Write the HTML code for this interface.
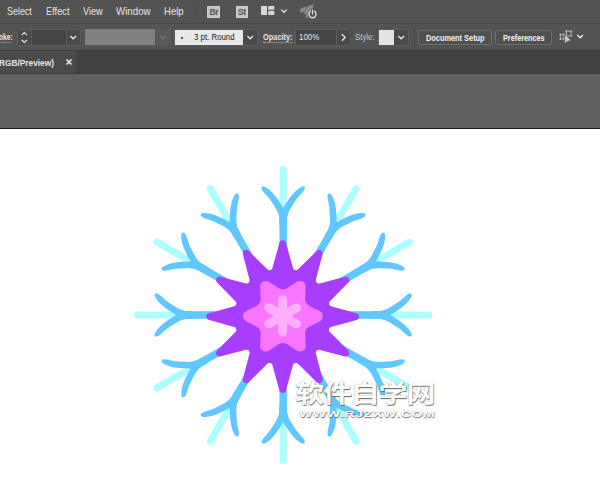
<!DOCTYPE html>
<html><head><meta charset="utf-8">
<style>
html,body{margin:0;padding:0;}
body{width:600px;height:499px;overflow:hidden;position:relative;background:#fff;font-family:"Liberation Sans","Noto Sans CJK SC",sans-serif;}
.abs{position:absolute;}
#menubar{left:0;top:0;width:600px;height:23px;background:#535353;}
#menuline{left:0;top:22.5px;width:600px;height:1.8px;background:#464646;z-index:2}
#toolbar{left:0;top:23px;width:600px;height:27px;background:#535353;}
#tabbar{left:0;top:50px;width:600px;height:23.9px;background:#424242;border-top:1px solid #3b3b3b;border-bottom:1.1px solid #3c3c3c;box-sizing:border-box}
#tab{left:0;top:51px;width:76px;height:21.7px;background:#4b4b4b;}
#gray{left:0;top:73.9px;width:600px;height:54px;background:#606060;}
#blackline{left:0;top:127.6px;width:600px;height:1.3px;background:#1c1c1c;}
.m{transform-origin:0 0;display:inline-block;position:absolute;top:5.4px;font-size:11px;color:#e6e6e6;line-height:13px;white-space:nowrap;}
.t{transform-origin:0 0;display:inline-block;position:absolute;font-size:8.5px;color:#e6e6e6;white-space:nowrap;line-height:11px;}
.box{position:absolute;box-sizing:border-box;}
.ic{position:absolute;width:12.8px;height:12.6px;background:#c2c2c2;box-shadow:inset 0 0 0 1px #d0d0d0;color:#555;font-size:8.6px;line-height:13.3px;text-align:center;letter-spacing:-0.4px;font-weight:bold}
.tb{border-bottom:1px dotted #bbb;line-height:9.6px !important;}
.btn{border:1px solid #6e6e6e;border-radius:2px;background:#505050;color:#f0f0f0;font-size:9px;line-height:15px;text-align:center;white-space:nowrap;font-weight:bold}
</style></head><body>
<div class="abs" id="menubar"></div>
<div class="abs" id="menuline"></div>
<div class="abs" id="toolbar"></div>
<div class="abs" id="tabbar"></div>
<div class="abs" id="tab"></div>
<div class="abs" id="gray"></div>
<div class="abs" id="blackline"></div>

<span class="m" id="m1" style="left:7.1px;transform:scaleX(0.811);">Select</span>
<span class="m" id="m2" style="left:45.7px;transform:scaleX(0.845);">Effect</span>
<span class="m" id="m3" style="left:82.7px;transform:scaleX(0.829);">View</span>
<span class="m" id="m4" style="left:116.1px;transform:scaleX(0.884);">Window</span>
<span class="m" id="m5" style="left:164.3px;transform:scaleX(0.866);">Help</span>
<div class="abs" style="left:195px;top:4px;width:1px;height:15px;background:#484848"></div>
<div class="ic" style="left:207.4px;top:5.5px;">Br</div>
<div class="ic" style="left:235.5px;top:5.5px;">St</div>
<svg class="abs" style="left:260px;top:5px" width="16" height="14" viewBox="0 0 16 14"><rect x="1" y="1" width="6" height="9" fill="#d6d6d6"/><rect x="8.2" y="1" width="6.1" height="3.7" fill="#d6d6d6"/><rect x="8.2" y="5.8" width="6.1" height="4.2" fill="#d6d6d6"/></svg>
<svg class="abs" style="left:280px;top:8px" width="9" height="7" viewBox="0 0 9 7"><path d="M1.4,1.6L4.1,4.3L6.8,1.6" stroke="#e6e6e6" stroke-width="1.3" fill="none"/></svg>
<svg class="abs" style="left:295px;top:0px" width="30" height="24" viewBox="0 0 30 24"><path d="M18.4,4.5Q10.8,5 9,13Q9.8,14.8 11.8,15Q19.2,11.5 18.4,4.5Z" fill="#8a8a8a"/><path d="M11,6.7Q5.6,7 4.6,11.2Q5.6,12.8 7.2,12.4Q11.4,10.8 11,6.7Z" fill="#8a8a8a"/><path d="M10.9,15.3L12.9,15L12.6,17.8L11.1,17.9Z" fill="#8a8a8a"/><circle cx="17.5" cy="14.3" r="4.6" fill="#535353"/><circle cx="17.5" cy="14.3" r="3.5" fill="none" stroke="#e2e2e2" stroke-width="1.4"/><path d="M17.5,8.6V14.6" stroke="#535353" stroke-width="3.4"/><path d="M17.5,9.7V14.5" stroke="#e2e2e2" stroke-width="1.3"/></svg>

<!-- toolbar -->
<span class="t tb" id="t1" style="font-weight:bold;left:-1.5px;top:32.8px;transform:scaleX(0.778);">oke:</span>
<div class="box" style="left:17px;top:29px;width:64px;height:17px;border:1px solid #5c5c5c;border-radius:2px;background:#4a4a4a"></div>
<div class="abs" style="left:31px;top:30px;width:36px;height:15px;background:#444;border-left:1px solid #5c5c5c;border-right:1px solid #5c5c5c;box-sizing:border-box"></div>
<svg class="abs" style="left:19px;top:30px" width="11" height="15" viewBox="0 0 11 15"><path d="M2.6,5.2L5.3,2.5L8,5.2M2.6,9.8L5.3,12.5L8,9.8" stroke="#e6e6e6" stroke-width="1.2" fill="none"/></svg>
<svg class="abs" style="left:68px;top:33px" width="11" height="9" viewBox="0 0 11 9"><path d="M2.4,3L5.2,5.8L8,3" stroke="#ececec" stroke-width="1.25" fill="none"/></svg>

<div class="abs" style="left:85px;top:29px;width:70.3px;height:16.3px;background:#818181"></div><div class="abs" style="left:155.6px;top:29px;width:15.6px;height:16.4px;background:#595959;border-radius:0 2px 2px 0"></div>
<svg class="abs" style="left:158px;top:33px" width="11" height="9" viewBox="0 0 11 9"><path d="M2.4,3L5.2,5.8L8,3" stroke="#787878" stroke-width="1.25" fill="none"/></svg>

<div class="box" style="left:174px;top:29px;width:84px;height:17px;border:1px solid #5c5c5c;border-radius:2px;background:#4a4a4a"></div>
<div class="abs" style="left:175px;top:29.8px;width:68px;height:14.8px;background:#e8e8e8"></div>
<div class="abs" style="left:181.3px;top:36.8px;width:2px;height:2px;background:#222;border-radius:1px"></div>
<span class="t" id="t2" style="left:193.7px;top:32.1px;color:#1a1a1a;transform:scaleX(0.924);">3 pt. Round</span>
<svg class="abs" style="left:245px;top:33px" width="11" height="9" viewBox="0 0 11 9"><path d="M2.4,3L5.2,5.8L8,3" stroke="#ececec" stroke-width="1.25" fill="none"/></svg>

<span class="t tb" id="t3" style="left:262.7px;top:32.8px;font-weight:bold;transform:scaleX(0.870);">Opacity:</span>
<div class="box" style="left:295px;top:29px;width:56px;height:17px;border:1px solid #5c5c5c;border-radius:2px;background:#4a4a4a"></div>
<div class="abs" style="left:296px;top:30px;width:41px;height:15px;background:#444;border-right:1px solid #5c5c5c;box-sizing:border-box"></div>
<span class="t" id="t4" style="left:299.1px;top:32.1px;transform:scaleX(0.929);">100%</span>
<svg class="abs" style="left:339px;top:32.1px" width="9" height="11" viewBox="0 0 9 11"><path d="M3,2.2L6.2,5.5L3,8.8" stroke="#e6e6e6" stroke-width="1.3" fill="none"/></svg>

<span class="t" id="t5" style="left:354.7px;top:32.1px;color:#c8c8c8;transform:scaleX(0.922);">Style:</span>
<div class="box" style="left:378px;top:29px;width:31px;height:17px;border:1px solid #5c5c5c;border-radius:2px;background:#4a4a4a"></div>
<div class="abs" style="left:379px;top:30px;width:15px;height:15px;background:#e4e4e4"></div>
<svg class="abs" style="left:396px;top:33px" width="11" height="9" viewBox="0 0 11 9"><path d="M2.4,3L5.2,5.8L8,3" stroke="#ececec" stroke-width="1.25" fill="none"/></svg>
<div class="abs" style="left:414px;top:27px;width:1px;height:20px;background:#484848"></div>

<div class="box btn" style="left:418px;top:29.5px;width:74px;height:15.5px;"></div><span class="t" id="t6" style="left:425.9px;top:32.8px;color:#f4f4f4;font-weight:bold;transform:scaleX(0.868);">Document Setup</span>
<div class="box btn" style="left:495px;top:29.5px;width:57px;height:15.5px;"></div><span class="t" id="t7" style="left:502.7px;top:32.8px;color:#f4f4f4;font-weight:bold;transform:scaleX(0.855);">Preferences</span>
<svg class="abs" style="left:553px;top:26px" width="40" height="24" viewBox="0 0 40 24"><path d="M6.2,8.6H11.8M6.2,12.8H11.8M7.4,7.4V14M10.8,7.4V14" stroke="#b4b4b4" stroke-width="1" fill="none"/><path d="M12.3,5.2H19.3M12.3,9.9H19.3M13.5,4V11M18.1,4V11" stroke="#b4b4b4" stroke-width="1" fill="none"/><path d="M11.8,8.4L11.8,17.6L14.2,15.4L18.2,14.4Z" fill="#d2d2d2" stroke="#535353" stroke-width="0.6"/></svg>
<svg class="abs" style="left:574.8px;top:32.3px" width="11" height="9" viewBox="0 0 11 9"><path d="M2.4,3L5.2,5.8L8,3" stroke="#ececec" stroke-width="1.25" fill="none"/></svg>

<!-- tab -->
<span class="t" id="t8" style="left:-1.3px;top:57px;font-weight:bold;font-size:9.5px;transform:scaleX(0.874);">RGB/Preview)</span>
<svg class="abs" style="left:65px;top:58px" width="8" height="8" viewBox="0 0 8 8"><path d="M1.5,1.5L6.5,6.5M6.5,1.5L1.5,6.5" stroke="#f0f0f0" stroke-width="1.5" fill="none"/></svg>

<svg id="flake" width="600" height="370" viewBox="0 129 600 370" style="position:absolute;left:0;top:129px">
<g transform="translate(283.2,315.0)">
<g transform="rotate(0)"><path d="M0,0H145.8" stroke="#adfeff" stroke-width="7" stroke-linecap="round" fill="none"/>
<path d="M60,0H100" stroke="#60c7ff" stroke-width="7.4" fill="none"/>
<path d="M90,-3.7L95,-3.7Q102,-4 108.6,-8.7Q116.9,-13.4 123.2,-19.8Q124.8,-21 125.8,-21.4Q129,-22.4 128.6,-18.9Q125.9,-13 118.2,-7.3Q113,-3.4 107,0L100,3.7L90,3.7Z" fill="#60c7ff"/><path d="M90,-3.7L95,-3.7Q102,-4 108.6,-8.7Q116.9,-13.4 123.2,-19.8Q124.8,-21 125.8,-21.4Q129,-22.4 128.6,-18.9Q125.9,-13 118.2,-7.3Q113,-3.4 107,0L100,3.7L90,3.7Z" fill="#60c7ff" transform="scale(1,-1)"/></g><g transform="rotate(-30)"><path d="M0,0H145.8" stroke="#adfeff" stroke-width="7" stroke-linecap="round" fill="none"/>
<path d="M60,0H100" stroke="#60c7ff" stroke-width="7.4" fill="none"/>
<path d="M90,-3.7L95,-3.7Q102,-4 108.6,-8.7Q116.9,-13.4 123.2,-19.8Q124.8,-21 125.8,-21.4Q129,-22.4 128.6,-18.9Q125.9,-13 118.2,-7.3Q113,-3.4 107,0L100,3.7L90,3.7Z" fill="#60c7ff"/><path d="M90,-3.7L95,-3.7Q102,-4 108.6,-8.7Q116.9,-13.4 123.2,-19.8Q124.8,-21 125.8,-21.4Q129,-22.4 128.6,-18.9Q125.9,-13 118.2,-7.3Q113,-3.4 107,0L100,3.7L90,3.7Z" fill="#60c7ff" transform="scale(1,-1)"/></g><g transform="rotate(-60)"><path d="M0,0H145.8" stroke="#adfeff" stroke-width="7" stroke-linecap="round" fill="none"/>
<path d="M60,0H100" stroke="#60c7ff" stroke-width="7.4" fill="none"/>
<path d="M90,-3.7L95,-3.7Q102,-4 108.6,-8.7Q116.9,-13.4 123.2,-19.8Q124.8,-21 125.8,-21.4Q129,-22.4 128.6,-18.9Q125.9,-13 118.2,-7.3Q113,-3.4 107,0L100,3.7L90,3.7Z" fill="#60c7ff"/><path d="M90,-3.7L95,-3.7Q102,-4 108.6,-8.7Q116.9,-13.4 123.2,-19.8Q124.8,-21 125.8,-21.4Q129,-22.4 128.6,-18.9Q125.9,-13 118.2,-7.3Q113,-3.4 107,0L100,3.7L90,3.7Z" fill="#60c7ff" transform="scale(1,-1)"/></g><g transform="rotate(-90)"><path d="M0,0H145.8" stroke="#adfeff" stroke-width="7" stroke-linecap="round" fill="none"/>
<path d="M60,0H100" stroke="#60c7ff" stroke-width="7.4" fill="none"/>
<path d="M90,-3.7L95,-3.7Q102,-4 108.6,-8.7Q116.9,-13.4 123.2,-19.8Q124.8,-21 125.8,-21.4Q129,-22.4 128.6,-18.9Q125.9,-13 118.2,-7.3Q113,-3.4 107,0L100,3.7L90,3.7Z" fill="#60c7ff"/><path d="M90,-3.7L95,-3.7Q102,-4 108.6,-8.7Q116.9,-13.4 123.2,-19.8Q124.8,-21 125.8,-21.4Q129,-22.4 128.6,-18.9Q125.9,-13 118.2,-7.3Q113,-3.4 107,0L100,3.7L90,3.7Z" fill="#60c7ff" transform="scale(1,-1)"/></g><g transform="rotate(-120)"><path d="M0,0H145.8" stroke="#adfeff" stroke-width="7" stroke-linecap="round" fill="none"/>
<path d="M60,0H100" stroke="#60c7ff" stroke-width="7.4" fill="none"/>
<path d="M90,-3.7L95,-3.7Q102,-4 108.6,-8.7Q116.9,-13.4 123.2,-19.8Q124.8,-21 125.8,-21.4Q129,-22.4 128.6,-18.9Q125.9,-13 118.2,-7.3Q113,-3.4 107,0L100,3.7L90,3.7Z" fill="#60c7ff"/><path d="M90,-3.7L95,-3.7Q102,-4 108.6,-8.7Q116.9,-13.4 123.2,-19.8Q124.8,-21 125.8,-21.4Q129,-22.4 128.6,-18.9Q125.9,-13 118.2,-7.3Q113,-3.4 107,0L100,3.7L90,3.7Z" fill="#60c7ff" transform="scale(1,-1)"/></g><g transform="rotate(-150)"><path d="M0,0H145.8" stroke="#adfeff" stroke-width="7" stroke-linecap="round" fill="none"/>
<path d="M60,0H100" stroke="#60c7ff" stroke-width="7.4" fill="none"/>
<path d="M90,-3.7L95,-3.7Q102,-4 108.6,-8.7Q116.9,-13.4 123.2,-19.8Q124.8,-21 125.8,-21.4Q129,-22.4 128.6,-18.9Q125.9,-13 118.2,-7.3Q113,-3.4 107,0L100,3.7L90,3.7Z" fill="#60c7ff"/><path d="M90,-3.7L95,-3.7Q102,-4 108.6,-8.7Q116.9,-13.4 123.2,-19.8Q124.8,-21 125.8,-21.4Q129,-22.4 128.6,-18.9Q125.9,-13 118.2,-7.3Q113,-3.4 107,0L100,3.7L90,3.7Z" fill="#60c7ff" transform="scale(1,-1)"/></g><g transform="rotate(-180)"><path d="M0,0H145.8" stroke="#adfeff" stroke-width="7" stroke-linecap="round" fill="none"/>
<path d="M60,0H100" stroke="#60c7ff" stroke-width="7.4" fill="none"/>
<path d="M90,-3.7L95,-3.7Q102,-4 108.6,-8.7Q116.9,-13.4 123.2,-19.8Q124.8,-21 125.8,-21.4Q129,-22.4 128.6,-18.9Q125.9,-13 118.2,-7.3Q113,-3.4 107,0L100,3.7L90,3.7Z" fill="#60c7ff"/><path d="M90,-3.7L95,-3.7Q102,-4 108.6,-8.7Q116.9,-13.4 123.2,-19.8Q124.8,-21 125.8,-21.4Q129,-22.4 128.6,-18.9Q125.9,-13 118.2,-7.3Q113,-3.4 107,0L100,3.7L90,3.7Z" fill="#60c7ff" transform="scale(1,-1)"/></g><g transform="rotate(-210)"><path d="M0,0H145.8" stroke="#adfeff" stroke-width="7" stroke-linecap="round" fill="none"/>
<path d="M60,0H100" stroke="#60c7ff" stroke-width="7.4" fill="none"/>
<path d="M90,-3.7L95,-3.7Q102,-4 108.6,-8.7Q116.9,-13.4 123.2,-19.8Q124.8,-21 125.8,-21.4Q129,-22.4 128.6,-18.9Q125.9,-13 118.2,-7.3Q113,-3.4 107,0L100,3.7L90,3.7Z" fill="#60c7ff"/><path d="M90,-3.7L95,-3.7Q102,-4 108.6,-8.7Q116.9,-13.4 123.2,-19.8Q124.8,-21 125.8,-21.4Q129,-22.4 128.6,-18.9Q125.9,-13 118.2,-7.3Q113,-3.4 107,0L100,3.7L90,3.7Z" fill="#60c7ff" transform="scale(1,-1)"/></g><g transform="rotate(-240)"><path d="M0,0H145.8" stroke="#adfeff" stroke-width="7" stroke-linecap="round" fill="none"/>
<path d="M60,0H100" stroke="#60c7ff" stroke-width="7.4" fill="none"/>
<path d="M90,-3.7L95,-3.7Q102,-4 108.6,-8.7Q116.9,-13.4 123.2,-19.8Q124.8,-21 125.8,-21.4Q129,-22.4 128.6,-18.9Q125.9,-13 118.2,-7.3Q113,-3.4 107,0L100,3.7L90,3.7Z" fill="#60c7ff"/><path d="M90,-3.7L95,-3.7Q102,-4 108.6,-8.7Q116.9,-13.4 123.2,-19.8Q124.8,-21 125.8,-21.4Q129,-22.4 128.6,-18.9Q125.9,-13 118.2,-7.3Q113,-3.4 107,0L100,3.7L90,3.7Z" fill="#60c7ff" transform="scale(1,-1)"/></g><g transform="rotate(-270)"><path d="M0,0H145.8" stroke="#adfeff" stroke-width="7" stroke-linecap="round" fill="none"/>
<path d="M60,0H100" stroke="#60c7ff" stroke-width="7.4" fill="none"/>
<path d="M90,-3.7L95,-3.7Q102,-4 108.6,-8.7Q116.9,-13.4 123.2,-19.8Q124.8,-21 125.8,-21.4Q129,-22.4 128.6,-18.9Q125.9,-13 118.2,-7.3Q113,-3.4 107,0L100,3.7L90,3.7Z" fill="#60c7ff"/><path d="M90,-3.7L95,-3.7Q102,-4 108.6,-8.7Q116.9,-13.4 123.2,-19.8Q124.8,-21 125.8,-21.4Q129,-22.4 128.6,-18.9Q125.9,-13 118.2,-7.3Q113,-3.4 107,0L100,3.7L90,3.7Z" fill="#60c7ff" transform="scale(1,-1)"/></g><g transform="rotate(-300)"><path d="M0,0H145.8" stroke="#adfeff" stroke-width="7" stroke-linecap="round" fill="none"/>
<path d="M60,0H100" stroke="#60c7ff" stroke-width="7.4" fill="none"/>
<path d="M90,-3.7L95,-3.7Q102,-4 108.6,-8.7Q116.9,-13.4 123.2,-19.8Q124.8,-21 125.8,-21.4Q129,-22.4 128.6,-18.9Q125.9,-13 118.2,-7.3Q113,-3.4 107,0L100,3.7L90,3.7Z" fill="#60c7ff"/><path d="M90,-3.7L95,-3.7Q102,-4 108.6,-8.7Q116.9,-13.4 123.2,-19.8Q124.8,-21 125.8,-21.4Q129,-22.4 128.6,-18.9Q125.9,-13 118.2,-7.3Q113,-3.4 107,0L100,3.7L90,3.7Z" fill="#60c7ff" transform="scale(1,-1)"/></g><g transform="rotate(-330)"><path d="M0,0H145.8" stroke="#adfeff" stroke-width="7" stroke-linecap="round" fill="none"/>
<path d="M60,0H100" stroke="#60c7ff" stroke-width="7.4" fill="none"/>
<path d="M90,-3.7L95,-3.7Q102,-4 108.6,-8.7Q116.9,-13.4 123.2,-19.8Q124.8,-21 125.8,-21.4Q129,-22.4 128.6,-18.9Q125.9,-13 118.2,-7.3Q113,-3.4 107,0L100,3.7L90,3.7Z" fill="#60c7ff"/><path d="M90,-3.7L95,-3.7Q102,-4 108.6,-8.7Q116.9,-13.4 123.2,-19.8Q124.8,-21 125.8,-21.4Q129,-22.4 128.6,-18.9Q125.9,-13 118.2,-7.3Q113,-3.4 107,0L100,3.7L90,3.7Z" fill="#60c7ff" transform="scale(1,-1)"/></g>
<path d="M73.8,3.4L74.4,3.2L74.8,2.9L75.2,2.6L75.6,2.3L75.9,1.8L76.1,1.4L76.3,0.9L76.4,0.4L76.4,-0.1L76.3,-0.6L76.2,-1.1L76.0,-1.5L75.8,-2.0L75.5,-2.4L75.1,-2.7L74.7,-3.0L74.2,-3.2L73.8,-3.4L48.2,-10.4L47.7,-10.7L47.0,-11.3L46.6,-12.0L46.4,-12.6L46.3,-13.2L46.4,-14.1L46.8,-14.9L47.2,-15.3L65.9,-34.3L66.3,-34.9L66.5,-35.4L66.6,-36.0L66.6,-36.5L66.6,-37.0L66.4,-37.7L66.1,-38.3L65.7,-38.8L65.1,-39.4L64.3,-39.7L63.5,-39.9L63.0,-39.9L62.5,-39.9L36.9,-33.2L36.3,-33.1L35.7,-33.1L35.1,-33.3L34.6,-33.5L33.9,-34.1L33.4,-34.8L33.1,-35.7L33.1,-36.6L39.9,-62.5L39.9,-63.3L39.8,-64.0L39.5,-64.8L39.1,-65.4L38.7,-65.8L38.1,-66.2L37.7,-66.4L37.0,-66.6L36.4,-66.6L35.7,-66.5L35.0,-66.3L34.5,-66.0L34.0,-65.6L15.1,-47.0L14.3,-46.5L13.8,-46.4L12.9,-46.3L12.3,-46.5L11.5,-46.9L11.0,-47.2L10.7,-47.7L10.3,-48.5L3.2,-74.2L3.0,-74.7L2.7,-75.1L2.4,-75.5L2.0,-75.8L1.5,-76.0L1.1,-76.2L0.6,-76.3L0.1,-76.4L-0.4,-76.4L-0.9,-76.3L-1.4,-76.1L-1.8,-75.9L-2.3,-75.6L-2.6,-75.2L-2.9,-74.8L-3.2,-74.2L-10.3,-48.5L-10.7,-47.7L-11.0,-47.2L-11.5,-46.9L-12.3,-46.5L-12.9,-46.3L-13.8,-46.4L-14.3,-46.5L-15.1,-47.0L-34.0,-65.6L-34.5,-66.0L-35.0,-66.3L-35.7,-66.5L-36.2,-66.6L-36.8,-66.6L-37.5,-66.5L-38.0,-66.3L-38.4,-66.0L-38.9,-65.6L-39.5,-64.9L-39.8,-64.2L-39.9,-63.3L-39.9,-62.5L-33.2,-36.9L-33.1,-36.3L-33.1,-35.7L-33.3,-35.1L-33.5,-34.6L-34.1,-33.9L-34.8,-33.4L-35.7,-33.1L-36.6,-33.1L-62.5,-39.9L-63.3,-39.9L-64.0,-39.8L-64.8,-39.5L-65.4,-39.1L-65.8,-38.7L-66.2,-38.1L-66.5,-37.5L-66.6,-36.8L-66.6,-36.2L-66.5,-35.5L-66.3,-34.9L-66.0,-34.5L-65.6,-34.0L-47.0,-15.1L-46.7,-14.6L-46.4,-13.8L-46.3,-12.9L-46.5,-12.3L-46.9,-11.5L-47.2,-11.0L-47.7,-10.7L-48.5,-10.3L-74.2,-3.2L-74.7,-3.0L-75.1,-2.7L-75.5,-2.4L-75.8,-2.0L-76.0,-1.5L-76.2,-1.1L-76.3,-0.6L-76.4,-0.1L-76.4,0.4L-76.3,0.9L-76.0,1.5L-75.8,2.0L-75.5,2.4L-75.1,2.7L-74.7,3.0L-74.2,3.2L-48.5,10.3L-47.7,10.7L-47.2,11.0L-46.9,11.5L-46.5,12.3L-46.3,12.9L-46.4,13.8L-46.5,14.3L-47.0,15.1L-65.6,34.0L-66.0,34.5L-66.3,35.0L-66.5,35.7L-66.6,36.2L-66.6,36.8L-66.5,37.4L-66.3,38.0L-66.0,38.4L-65.6,38.9L-64.9,39.5L-64.2,39.8L-63.3,39.9L-62.5,39.9L-36.9,33.2L-36.3,33.1L-35.7,33.1L-35.1,33.3L-34.6,33.5L-33.9,34.1L-33.4,34.8L-33.1,35.7L-33.1,36.6L-39.9,62.5L-39.9,63.3L-39.8,64.0L-39.5,64.8L-39.1,65.4L-38.7,65.8L-38.1,66.2L-37.5,66.5L-36.8,66.6L-36.2,66.6L-35.5,66.5L-34.9,66.3L-34.5,66.0L-34.0,65.6L-15.1,47.0L-14.3,46.5L-13.8,46.4L-12.9,46.3L-12.3,46.5L-11.5,46.9L-11.0,47.2L-10.7,47.7L-10.3,48.5L-3.2,74.2L-3.0,74.7L-2.7,75.1L-2.4,75.5L-2.0,75.8L-1.5,76.0L-1.1,76.2L-0.6,76.3L-0.1,76.4L0.6,76.3L1.1,76.2L1.5,76.0L2.0,75.8L2.4,75.5L2.7,75.1L3.0,74.7L3.2,74.2L10.3,48.5L10.7,47.7L11.0,47.2L11.5,46.9L12.3,46.5L12.9,46.3L13.8,46.4L14.3,46.5L15.1,47.0L34.0,65.6L34.5,66.0L35.0,66.3L35.7,66.5L36.2,66.6L36.8,66.6L37.4,66.5L38.0,66.3L38.4,66.0L38.9,65.6L39.5,64.9L39.8,64.2L39.9,63.3L39.9,62.5L33.2,36.9L33.1,36.3L33.1,35.7L33.3,35.1L33.5,34.6L34.1,33.9L34.8,33.4L35.7,33.1L36.6,33.1L62.3,39.8L63.0,39.9L63.8,39.9L64.5,39.7L65.2,39.3L65.7,38.8L66.1,38.3L66.4,37.7L66.6,37.0L66.6,36.4L66.5,35.7L66.3,35.0L66.0,34.5L65.6,34.0L47.2,15.3L46.8,14.9L46.4,14.1L46.3,13.2L46.4,12.6L46.6,12.0L47.0,11.3L47.7,10.7L48.2,10.4Z" fill="#a73eff" transform="translate(-0.5,1.6)"/>
<path d="M36.6,5.2L37.3,4.8L37.8,4.5L38.6,3.7L39.2,2.8L39.6,1.7L39.9,0.6L39.9,-0.5L39.7,-1.6L39.3,-2.6L38.9,-3.2L38.6,-3.7L37.9,-4.4L37.3,-4.8L36.6,-5.2L26.6,-10.3L25.9,-10.6L25.3,-11.1L24.7,-11.6L24.1,-12.2L23.7,-12.8L23.2,-13.4L22.9,-14.1L22.6,-14.8L22.4,-15.6L22.2,-16.3L22.2,-17.1L22.2,-17.9L22.8,-29.3L22.8,-30.1L22.6,-31.0L22.3,-32.1L21.9,-32.7L21.3,-33.5L20.8,-34.0L19.9,-34.6L19.0,-35.0L18.3,-35.2L17.4,-35.3L16.7,-35.3L15.7,-35.2L15.0,-35.0L14.2,-34.6L4.4,-28.1L3.7,-27.7L3.0,-27.4L2.3,-27.2L1.5,-27.0L0.8,-26.9L0.0,-26.8L-0.8,-26.9L-1.5,-27.0L-2.3,-27.2L-3.0,-27.4L-3.7,-27.7L-4.4,-28.1L-13.8,-34.3L-14.5,-34.7L-15.0,-35.0L-15.6,-35.1L-16.3,-35.3L-17.2,-35.3L-17.8,-35.3L-18.3,-35.2L-19.0,-35.0L-20.0,-34.5L-20.5,-34.2L-21.2,-33.6L-21.9,-32.7L-22.2,-32.2L-22.5,-31.6L-22.8,-30.5L-22.8,-29.9L-22.8,-29.1L-22.2,-17.9L-22.2,-17.1L-22.2,-16.3L-22.4,-15.6L-22.6,-14.8L-22.9,-14.1L-23.2,-13.4L-23.7,-12.8L-24.1,-12.2L-24.7,-11.6L-25.3,-11.1L-25.9,-10.6L-26.6,-10.3L-36.6,-5.2L-37.3,-4.8L-37.8,-4.5L-38.6,-3.7L-38.9,-3.2L-39.3,-2.6L-39.7,-1.6L-39.9,-0.5L-39.9,0.5L-39.8,1.0L-39.6,1.7L-39.4,2.3L-39.2,2.8L-38.7,3.5L-38.2,4.1L-37.8,4.5L-37.3,4.8L-36.6,5.2L-26.6,10.3L-25.9,10.6L-25.3,11.1L-24.7,11.6L-24.1,12.2L-23.7,12.8L-23.2,13.4L-22.9,14.1L-22.6,14.8L-22.4,15.6L-22.2,16.3L-22.2,17.1L-22.2,17.9L-22.8,29.3L-22.8,30.1L-22.6,31.0L-22.4,31.7L-22.0,32.6L-21.6,33.2L-20.8,34.0L-19.9,34.6L-19.0,35.0L-18.3,35.2L-17.4,35.3L-16.7,35.3L-15.7,35.2L-15.0,35.0L-14.2,34.6L-4.4,28.1L-3.7,27.7L-3.0,27.4L-2.3,27.2L-1.5,27.0L-0.8,26.9L-0.0,26.8L0.8,26.9L1.5,27.0L2.3,27.2L3.0,27.4L3.7,27.7L4.4,28.1L13.8,34.3L14.5,34.7L15.0,35.0L16.1,35.2L16.7,35.3L17.4,35.3L18.3,35.2L18.9,35.0L19.9,34.6L20.3,34.3L20.9,33.8L21.3,33.5L21.9,32.7L22.4,31.7L22.6,31.0L22.8,30.5L22.8,29.9L22.8,29.1L22.2,17.9L22.2,17.1L22.2,16.3L22.4,15.6L22.6,14.8L22.9,14.1L23.2,13.4L23.7,12.8L24.1,12.2L24.7,11.6L25.3,11.1L25.9,10.6L26.6,10.3Z" fill="#f875ff" transform="translate(-0.3,1.2)"/>
<path d="M0.00,-16.10L-0.00,16.10M13.94,-8.05L-13.94,8.05M-13.94,-8.05L13.94,8.05" transform="translate(-0.6,0.8)" stroke="#fdaeff" stroke-width="9" stroke-linecap="round" fill="none"/>
</g>
</svg>
<div id="wm1" class="abs" style="left:295.2px;top:379.2px;font-family:'Liberation Sans','Noto Sans CJK SC',sans-serif;font-weight:700;font-size:29px;line-height:36px;color:#fff;white-space:nowrap;transform-origin:0 0;transform:scale(1,0.807);text-shadow:0 0 1px rgba(110,110,110,0.7),0.6px 1.8px 1.2px rgba(85,85,85,0.9);letter-spacing:-1.2px">软件自学网</div>
<div id="wm2" class="abs" style="left:298.5px;top:406.6px;font-weight:bold;font-size:9.5px;line-height:14px;color:#fff;white-space:nowrap;transform-origin:0 0;transform:scaleX(1.465);text-shadow:0 0 0.8px rgba(110,110,110,0.6),0.4px 1.2px 1px rgba(85,85,85,0.9);letter-spacing:0.5px">WWW.RJZXW.COM</div>
</body></html>
